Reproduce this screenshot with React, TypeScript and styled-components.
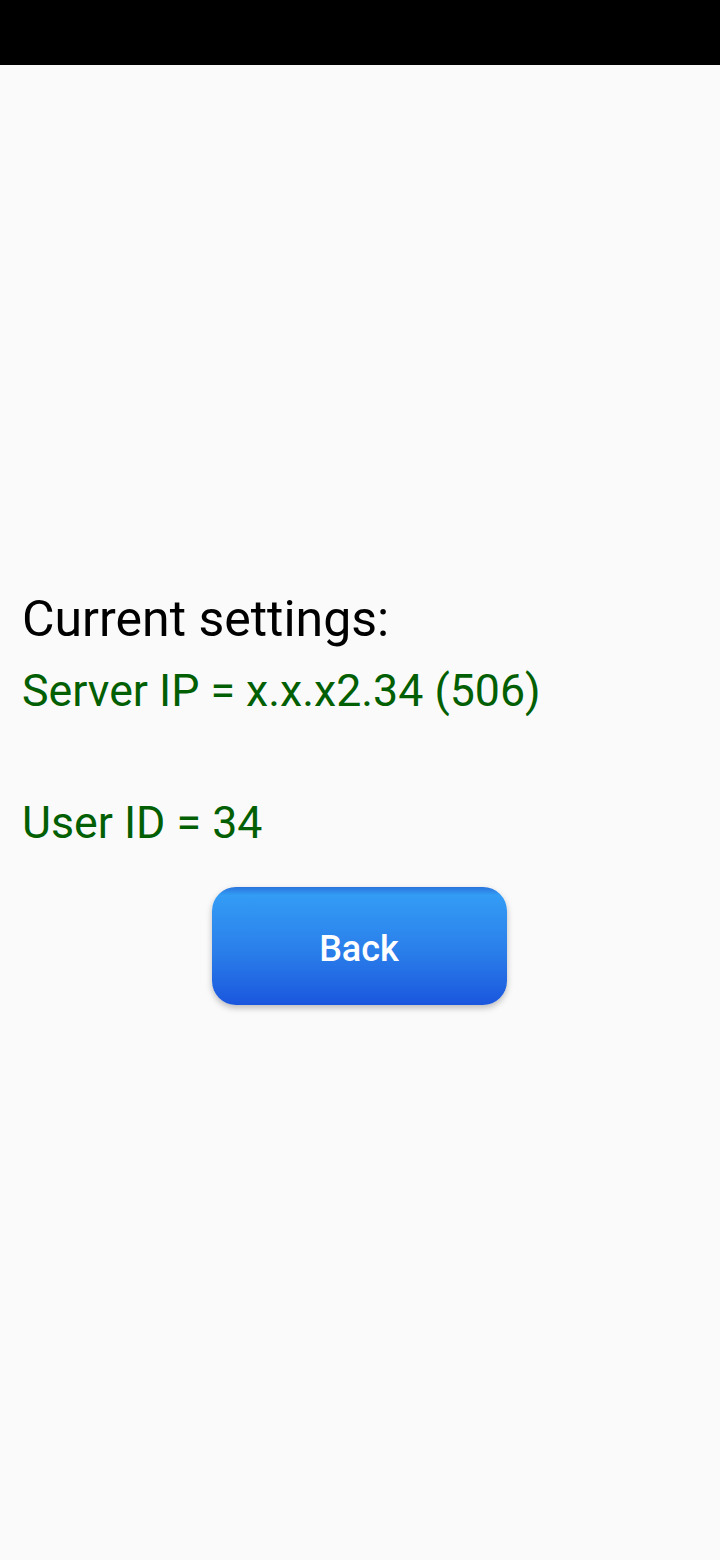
import React from "react";
import styled, { createGlobalStyle } from "styled-components";

const Global = createGlobalStyle`
  html, body { margin: 0; padding: 0; background: #fafafa; }
  body { font-family: Roboto, "Noto Sans", sans-serif; }
`;

const Screen = styled.div`
  width: 720px;
  height: 1560px;
  display: flex;
  flex-direction: column;
  background: #fafafa;
`;

const StatusBar = styled.div`
  height: 65px;
  background: #000;
  flex-shrink: 0;
`;

const Content = styled.main`
  display: flex;
  flex-direction: column;
  padding: 524px 22px 0 22px;
`;

const Heading = styled.h1`
  margin: 0;
  font-size: 50px;
  font-weight: 400;
  line-height: 60px;
  color: #000;
`;

const Info = styled.p<{ $gap?: number }>`
  margin: ${(p) => p.$gap ?? 0}px 0 0 0;
  font-size: 44.7px;
  font-weight: 400;
  line-height: 60px;
  color: #035f03;
`;

const ButtonRow = styled.div`
  display: flex;
  justify-content: center;
  margin-top: 34px;
  padding-right: 2px;
`;

const BackButton = styled.button`
  width: 295px;
  height: 118px;
  padding: 6px 0 0 0;
  border: none;
  border-radius: 24px;
  background: linear-gradient(to bottom, #2a74dc 0px, #339cf5 8px, #2a7eea 55%, #1a56dd 100%);
  box-shadow: 0 3px 6px rgba(0, 0, 0, 0.25);
  color: #fff;
  font-family: Roboto, sans-serif;
  font-size: 36px;
  font-weight: 500;
  cursor: pointer;
`;

export default function App() {
  return (
    <Screen>
      <Global />
      <StatusBar />
      <Content>
        <Heading>Current settings:</Heading>
        <Info $gap={12}>Server IP = x.x.x2.34 (506)</Info>
        <Info $gap={72}>User ID = 34</Info>
        <ButtonRow>
          <BackButton>Back</BackButton>
        </ButtonRow>
      </Content>
    </Screen>
  );
}
